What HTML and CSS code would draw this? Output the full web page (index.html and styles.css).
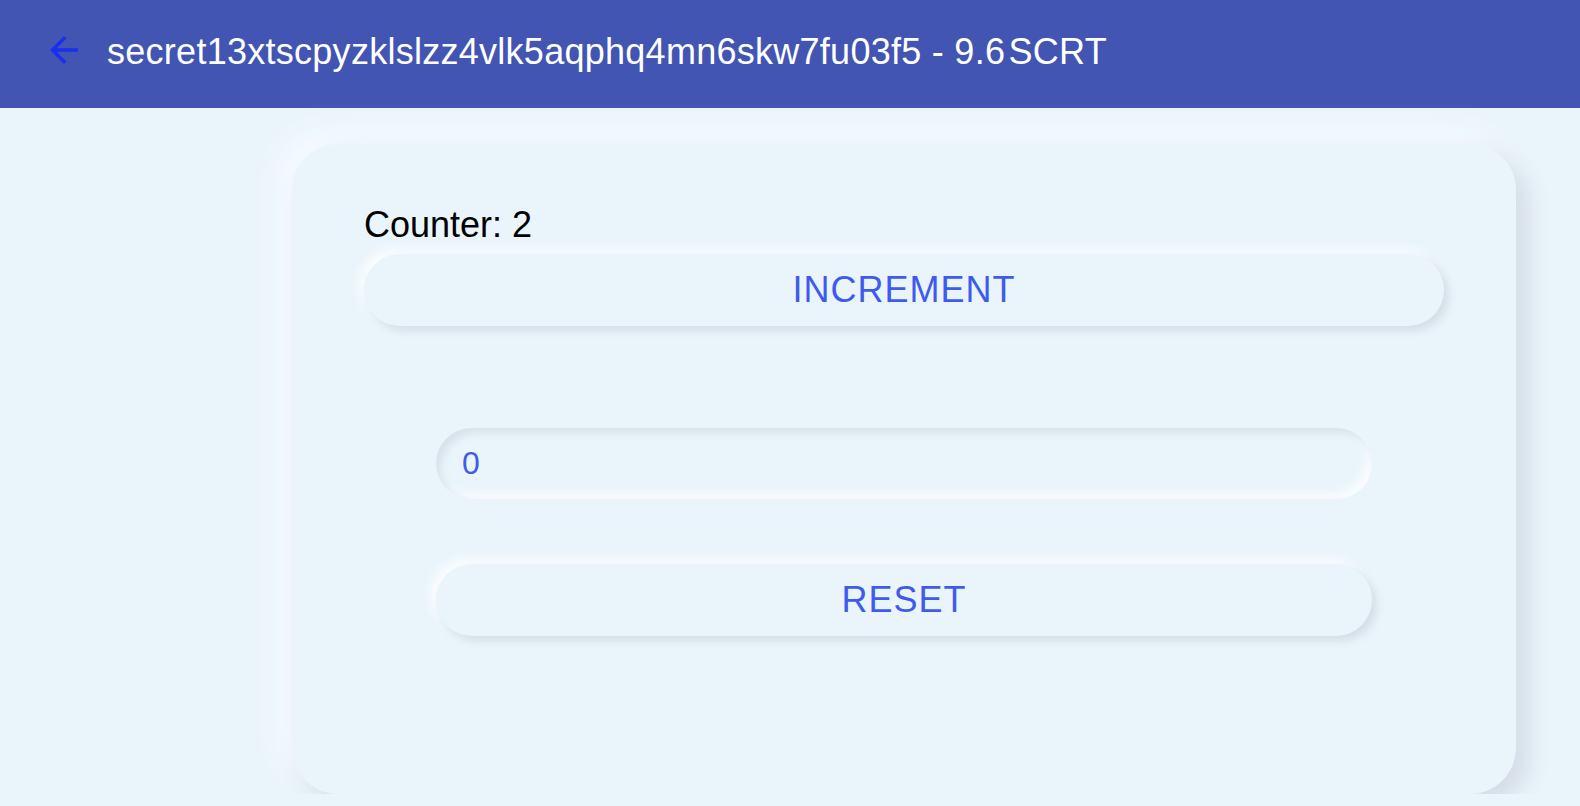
FILE: index.html
```html
<!DOCTYPE html>
<html lang="en">
<head>
<meta charset="utf-8">
<title>Counter</title>
<link rel="stylesheet" href="styles.css">
</head>
<body>
<header class="appbar">
  <button class="back" aria-label="Back">
    <svg viewBox="0 0 24 24" width="42" height="42"><path d="M20 11H7.83l5.59-5.59L12 4l-8 8 8 8 1.41-1.41L7.83 13H20v-2z" fill="currentColor"/></svg>
  </button>
  <h1 class="title">secret13xtscpyzklslzz4vlk5aqphq4mn6skw7fu03f5 - 9.6&#8202;SCRT</h1>
</header>
<main class="page">
  <section class="card">
    <div class="counter">Counter: 2</div>
    <button class="neu-btn">Increment</button>
    <form class="reset-form">
      <input class="neu-input" type="text" value="0">
      <button type="button" class="neu-btn">Reset</button>
    </form>
  </section>
</main>
</body>
</html>
```
FILE: styles.css
```css
* { box-sizing: border-box; }
html, body {
  margin: 0;
  padding: 0;
  background: #eaf5fb;
  font-family: "Liberation Sans", Arial, sans-serif;
  overflow: hidden;
}
.appbar {
  height: 108px;
  background: #4255b2;
  display: flex;
  align-items: center;
  padding-left: 43px;
  padding-bottom: 4px;
  gap: 22px;
}
.back {
  background: none;
  border: none;
  padding: 0;
  width: 42px;
  height: 42px;
  color: #1a2ef0;
  display: flex;
  margin-bottom: 4px;
}
.title {
  margin: 0;
  font-size: 36px;
  font-weight: 400;
  color: #ffffff;
  line-height: 42px;
  letter-spacing: 0.27px;
  white-space: nowrap;
}
.page {
  padding: 36px 64px 0 292px;
}
.card {
  background: #eaf5fb;
  border-radius: 46px;
  padding: 60px 72px 158px;
  box-shadow: 12px 12px 26px #d3dbe6, -12px -12px 26px #f7fbff;
}
.counter {
  font-size: 36px;
  line-height: 42px;
  color: #000;
  margin-bottom: 8px;
}
.neu-btn {
  display: block;
  width: 100%;
  height: 72px;
  border: none;
  border-radius: 36px;
  background: #eaf5fb;
  color: #3f5bee;
  font-family: "Liberation Sans", Arial, sans-serif;
  font-size: 36px;
  letter-spacing: 1px;
  text-transform: uppercase;
  box-shadow: 5px 5px 10px #d5dde8, -5px -5px 10px #fbfdff;
  padding: 0;
}
.reset-form {
  margin: 102px 72px 0;
  display: flex;
  flex-direction: column;
  gap: 65px;
}
.neu-input {
  display: block;
  width: 100%;
  height: 71px;
  border: none;
  outline: none;
  border-radius: 36px;
  background: #eaf5fb;
  color: #3f5bee;
  font-family: "Liberation Sans", Arial, sans-serif;
  font-size: 32px;
  padding: 0 26px;
  box-shadow: inset 5px 5px 9px #d8e0ea, inset -5px -5px 9px #fbfdff;
}
```
